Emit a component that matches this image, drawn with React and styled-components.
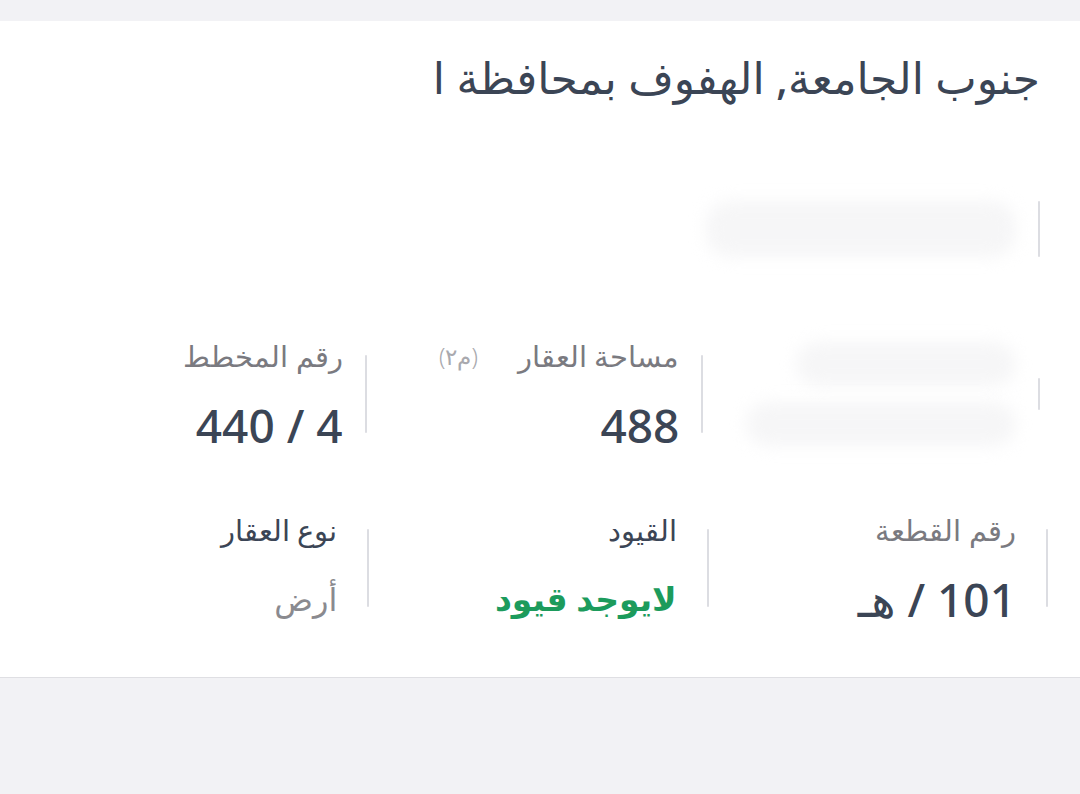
import React from 'react';
import styled, { createGlobalStyle } from 'styled-components';

const GlobalStyle = createGlobalStyle`
    html, body {
        margin: 0;
        padding: 0;
        background: #f2f2f5;
    }
    body {
        font-family: "Noto Sans", "DejaVu Sans", sans-serif;
    }
`

const Page = styled.div`
    width: 1080px;
    height: 794px;
    padding-top: 21px;
    box-sizing: border-box;
    background: #f2f2f5;
    overflow: hidden;
`

const Card = styled.div`
    direction: rtl;
    height: 657px;
    box-sizing: border-box;
    background: #ffffff;
    border-bottom: 1px solid #dfdfe3;
    padding: 26px 40px 0 30px;
`

const Title = styled.h1`
    margin: 0;
    width: 605px;
    overflow: hidden;
    white-space: nowrap;
    font-size: 44px;
    font-weight: 500;
    line-height: 60px;
    color: #3b4555;
`

const Grid = styled.div`
    display: grid;
    grid-template-columns: repeat(3, 1fr);
    margin-top: ${p => p.top}px;
    margin-right: ${p => p.shift || 0}px;
`

const Cell = styled.div`
    display: flex;
    align-items: center;
    gap: ${p => p.pad || 22}px;
`

const Divider = styled.div`
    flex: none;
    width: 2px;
    height: ${p => p.h || 78}px;
    background: #dcdde2;
    border-radius: 1px;
`

const Content = styled.div`
    display: flex;
    flex-direction: column;
    align-items: flex-start;
    gap: ${p => p.gap || 24}px;
`

const Label = styled.div`
    display: flex;
    align-items: center;
    gap: 40px;
    font-size: 29px;
    font-weight: 300;
    line-height: 38px;
    color: ${p => p.dark ? '#3b4555' : '#7a7a80'};
`

const Unit = styled.span`
    font-size: 23px;
    font-weight: 300;
    color: #a9a9ae;
`

const Value = styled.div`
    font-size: ${p => p.size || 46}px;
    font-weight: ${p => p.weight || 500};
    line-height: 52px;
    color: ${p => p.color || '#3b4555'};
`

const Redacted = styled.div`
    width: ${p => p.w}px;
    height: ${p => p.h}px;
    background: #f6f6f7;
    border-radius: 24px;
    filter: blur(8px);
`

const App = () => {
    return (
        <Page>
            <GlobalStyle />
            <Card>
                <Title>جنوب الجامعة, الهفوف بمحافظة الأحساء</Title>

                <Grid top={94}>
                    <Cell>
                        <Divider h={56} />
                        <Content>
                            <Redacted w={310} h={56} />
                        </Content>
                    </Cell>
                    <div />
                    <div />
                </Grid>

                <Grid top={80}>
                    <Cell>
                        <Divider h={32} />
                        <Content gap={16}>
                            <Redacted w={220} h={44} />
                            <Redacted w={270} h={44} />
                        </Content>
                    </Cell>
                    <Cell>
                        <Divider />
                        <Content>
                            <Label>مساحة العقار <Unit>(م٢)</Unit></Label>
                            <Value>488</Value>
                        </Content>
                    </Cell>
                    <Cell>
                        <Divider />
                        <Content>
                            <Label>رقم المخطط</Label>
                            <Value dir="ltr">440 / 4</Value>
                        </Content>
                    </Cell>
                </Grid>

                <Grid top={60} shift={-8}>
                    <Cell pad={30}>
                        <Divider />
                        <Content>
                            <Label>رقم القطعة</Label>
                            <Value>101 / هـ</Value>
                        </Content>
                    </Cell>
                    <Cell pad={30}>
                        <Divider />
                        <Content>
                            <Label dark>القيود</Label>
                            <Value size={33} weight={700} color="#1c9b5c">لايوجد قيود</Value>
                        </Content>
                    </Cell>
                    <Cell pad={30}>
                        <Divider />
                        <Content>
                            <Label dark>نوع العقار</Label>
                            <Value size={32} weight={400} color="#8a8a8f">أرض</Value>
                        </Content>
                    </Cell>
                </Grid>
            </Card>
        </Page>
    );
}

export default App;
